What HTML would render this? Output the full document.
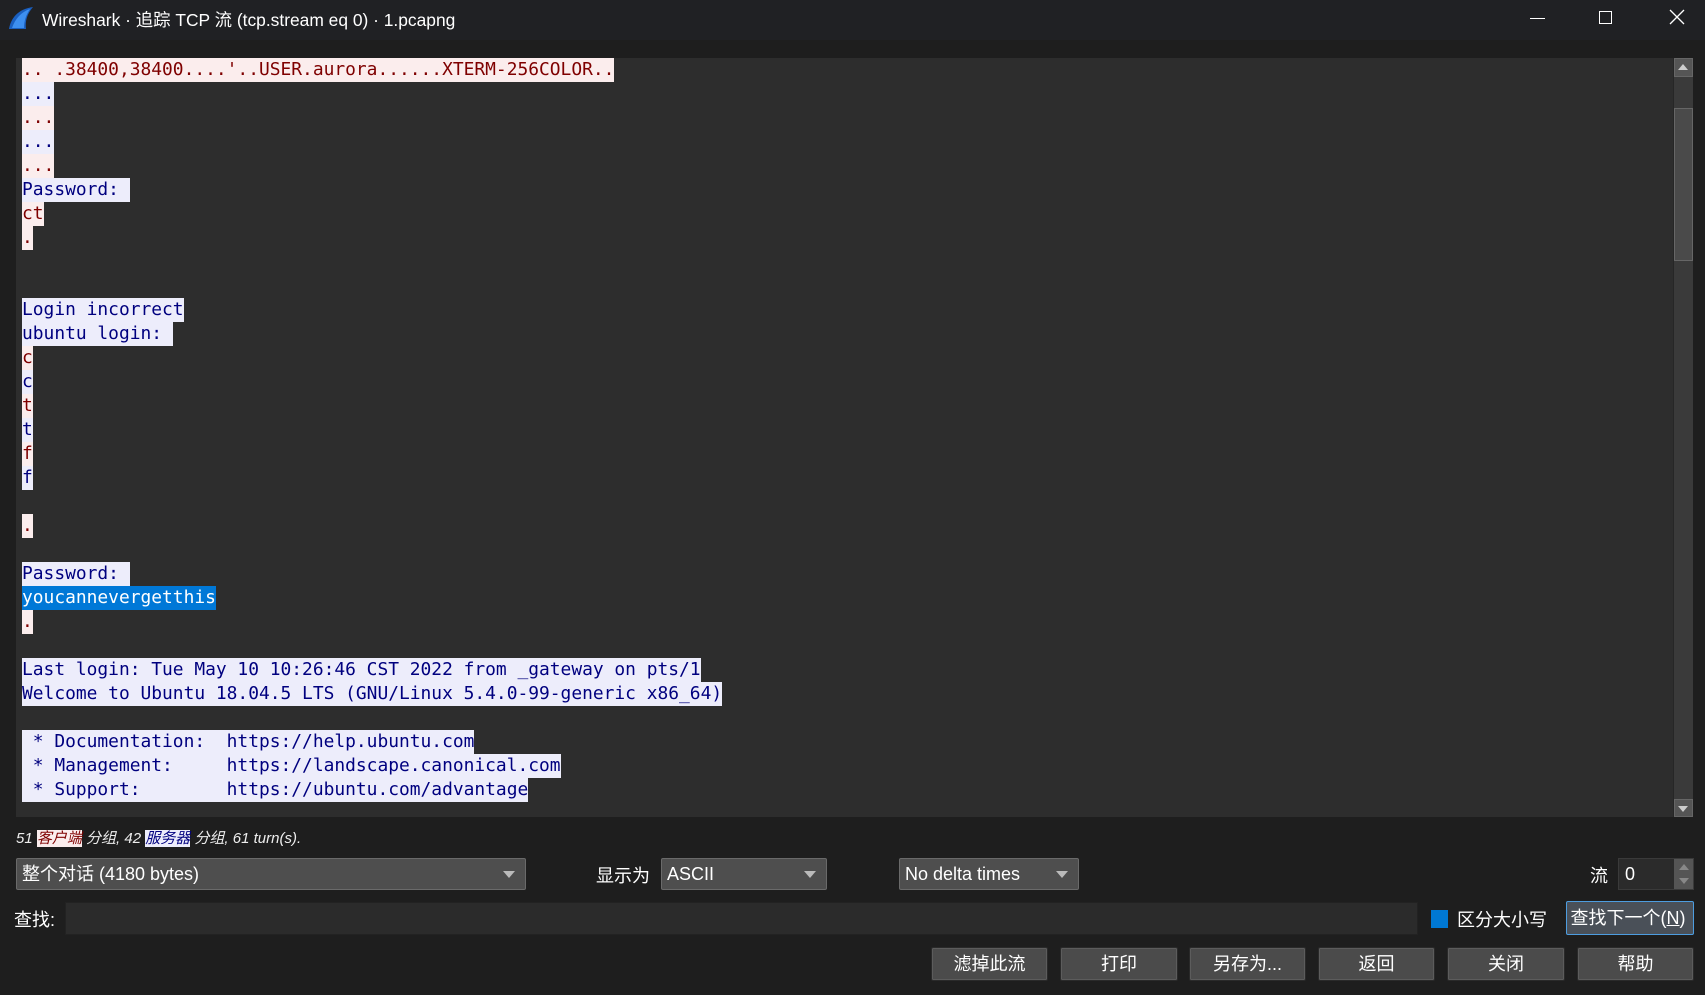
<!DOCTYPE html>
<html><head><meta charset="utf-8"><style>
*{margin:0;padding:0;box-sizing:border-box}
body{width:1705px;height:995px;background:#1e1e1e;position:relative;overflow:hidden;font-family:"Liberation Sans","Noto Sans CJK SC",sans-serif;color:#fff}
.abs{position:absolute}
#title{left:0;top:0;width:1705px;height:40px;background:#202124}
#title .t{left:42px;top:7px;font-size:17.4px;color:#fff;white-space:nowrap}
#ta{left:16px;top:58px;width:1657px;height:759px;background:#2d2d2d;overflow:hidden}
.ln{position:absolute;left:6px;height:24px;line-height:24px;font-family:"DejaVu Sans Mono","Liberation Mono",monospace;font-size:17.9px;white-space:pre}
.c{background:#fbeded;color:#7f0000}
.s{background:#ededfb;color:#00007f}
.sel{background:#0078d7;color:#fff}
#sb{left:1673px;top:58px;width:20px;height:759px;background:#3a3a3a;border-left:1px solid #262626}
.btn{position:absolute;height:34px;background:#4b4b4b;border:1px solid #2a2a2a;box-shadow:inset 0 0 0 1px #5c5c5c;border-radius:2px;font-size:18px;color:#fff;text-align:center;line-height:32px}
.combo{position:absolute;height:32px;background:#4e4e4e;border:1px solid #6a6a6a;border-radius:2px;font-size:18px;line-height:30px;padding-left:5px;color:#fff;white-space:nowrap}
.arr{position:absolute;right:10px;top:12px;width:0;height:0;border-left:6px solid transparent;border-right:6px solid transparent;border-top:7px solid #bbb}
.lbl{position:absolute;font-size:18px;color:#fff;white-space:nowrap}
</style></head><body>
<div id="title" class="abs">
<svg class="abs" style="left:8px;top:6px" width="26" height="24" viewBox="0 0 26 24"><path d="M1 23 C3 12 10 3 25 1 C19 8 17 15 18 23 Z" fill="#1a5fc0"/><path d="M4 22 C7 13 13 6 22 3 C18 9 16 15 16 22 Z" fill="#3d8ff0"/></svg>
<div class="abs t">Wireshark · 追踪 TCP 流 (tcp.stream eq 0) · 1.pcapng</div>
<div class="abs" style="left:1530px;top:18px;width:15px;height:1px;background:#fff"></div>
<div class="abs" style="left:1599px;top:11px;width:13px;height:13px;border:1.3px solid #fff"></div>
<svg class="abs" style="left:1669px;top:9px" width="16" height="16" viewBox="0 0 16 16"><path d="M1 1L15 15M15 1L1 15" stroke="#fff" stroke-width="1.3"/></svg>
</div>
<div id="ta" class="abs">
<div class="ln c" style="top:0px">.. .38400,38400....'..USER.aurora......XTERM-256COLOR..</div>
<div class="ln s" style="top:24px">...</div>
<div class="ln c" style="top:48px">...</div>
<div class="ln s" style="top:72px">...</div>
<div class="ln c" style="top:96px">...</div>
<div class="ln s" style="top:120px">Password: </div>
<div class="ln c" style="top:144px">ct</div>
<div class="ln c" style="top:168px">.</div>
<div class="ln s" style="top:240px">Login incorrect</div>
<div class="ln s" style="top:264px">ubuntu login: </div>
<div class="ln c" style="top:288px">c</div>
<div class="ln s" style="top:312px">c</div>
<div class="ln c" style="top:336px">t</div>
<div class="ln s" style="top:360px">t</div>
<div class="ln c" style="top:384px">f</div>
<div class="ln s" style="top:408px">f</div>
<div class="ln c" style="top:456px">.</div>
<div class="ln s" style="top:504px">Password: </div>
<div class="ln sel" style="top:528px">youcannevergetthis</div>
<div class="ln c" style="top:552px">.</div>
<div class="ln s" style="top:600px">Last login: Tue May 10 10:26:46 CST 2022 from _gateway on pts/1</div>
<div class="ln s" style="top:624px">Welcome to Ubuntu 18.04.5 LTS (GNU/Linux 5.4.0-99-generic x86_64)</div>
<div class="ln s" style="top:672px"> * Documentation:  https://help.ubuntu.com</div>
<div class="ln s" style="top:696px"> * Management:     https://landscape.canonical.com</div>
<div class="ln s" style="top:720px"> * Support:        https://ubuntu.com/advantage</div>
</div>
<div id="sb" class="abs">
<div class="abs" style="left:0;top:0;width:19px;height:19px;background:#555;border:1px solid #666"></div>
<div class="abs" style="left:4px;top:6px;border-left:5px solid transparent;border-right:5px solid transparent;border-bottom:6px solid #ccc"></div>
<div class="abs" style="left:0;top:50px;width:19px;height:153px;background:#4a4a4a;border:1px solid #666"></div>
<div class="abs" style="left:0;top:741px;width:19px;height:18px;background:#555;border:1px solid #666"></div>
<div class="abs" style="left:4px;top:748px;border-left:5px solid transparent;border-right:5px solid transparent;border-top:6px solid #ccc"></div>
</div>
<div class="abs" style="left:16px;top:827px;font-size:15px;font-style:italic;white-space:nowrap;color:#eee">51 <span style="background:#fbeded;color:#7f0000">客户端</span> 分组, 42 <span style="background:#ededfb;color:#00007f">服务器</span> 分组, 61 turn(s).</div>
<div class="combo" style="left:16px;top:858px;width:510px">整个对话 (4180 bytes)<div class="arr"></div></div>
<div class="lbl" style="left:596px;top:862px">显示为</div>
<div class="combo" style="left:661px;top:858px;width:166px">ASCII<div class="arr"></div></div>
<div class="combo" style="left:899px;top:858px;width:180px">No delta times<div class="arr"></div></div>
<div class="lbl" style="left:1590px;top:862px">流</div>
<div class="abs" style="left:1618px;top:858px;width:76px;height:32px;background:#2b2b2b;border:1px solid #3a3a3a;font-size:18px;line-height:30px;padding-left:6px">0</div>
<div class="abs" style="left:1674px;top:859px;width:19px;height:30px;background:#555"></div>
<div class="abs" style="left:1679px;top:864px;border-left:5px solid transparent;border-right:5px solid transparent;border-bottom:6px solid #888"></div>
<div class="abs" style="left:1679px;top:878px;border-left:5px solid transparent;border-right:5px solid transparent;border-top:6px solid #888"></div>
<div class="lbl" style="left:14px;top:906px">查找:</div>
<div class="abs" style="left:65px;top:902px;width:1353px;height:33px;background:#2b2b2b;border:1px solid #222"></div>
<div class="abs" style="left:1431px;top:910px;width:17px;height:18px;background:#0078d4"></div>
<div class="lbl" style="left:1457px;top:906px">区分大小写</div>
<div class="btn" style="left:1566px;top:901px;width:128px;background:#4a5058;border:1px solid #4d9de0;box-shadow:none;padding-right:4px">查找下一个(<u>N</u>)</div>
<div class="btn" style="left:931px;top:947px;width:117px">滤掉此流</div>
<div class="btn" style="left:1060px;top:947px;width:118px">打印</div>
<div class="btn" style="left:1189px;top:947px;width:117px">另存为...</div>
<div class="btn" style="left:1318px;top:947px;width:117px">返回</div>
<div class="btn" style="left:1447px;top:947px;width:118px">关闭</div>
<div class="btn" style="left:1577px;top:947px;width:117px">帮助</div>
</body></html>
